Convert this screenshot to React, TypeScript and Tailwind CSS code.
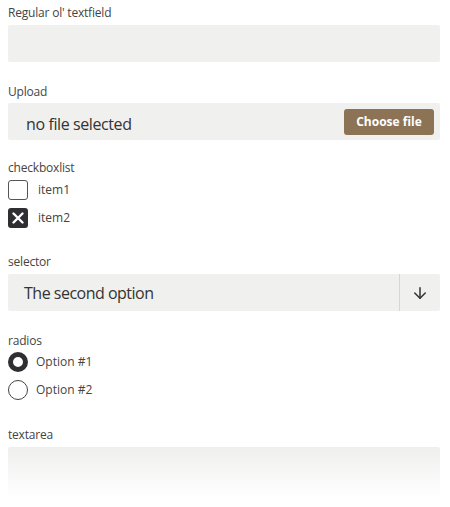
import { ArrowDown } from "lucide-react";

const font = { fontFamily: '"Open Sans", "Liberation Sans", sans-serif' };

function Label({ children }: { children: string }) {
  return <div className="h-[17px] text-[12px] leading-[17px] tracking-[-0.2px] text-[#444]">{children}</div>;
}

function Checkbox({ checked, label }: { checked?: boolean; label: string }) {
  return (
    <div className="flex h-[20px] items-center gap-[10px]">
      {checked ? (
        <span className="flex h-[20px] w-[20px] items-center justify-center rounded-[3px] bg-[#2e2e33]">
          <svg width="12" height="12" viewBox="0 0 12 12">
            <path d="M1.5 1.5 L10.5 10.5 M10.5 1.5 L1.5 10.5" stroke="#fff" strokeWidth="2.4" strokeLinecap="round" />
          </svg>
        </span>
      ) : (
        <span className="h-[20px] w-[20px] rounded-[3px] border-[1.5px] border-[#555]" />
      )}
      <span className="text-[12px] text-[#444]">{label}</span>
    </div>
  );
}

function Radio({ checked, label }: { checked?: boolean; label: string }) {
  return (
    <div className="flex h-[20px] items-center gap-[8px]">
      {checked ? (
        <span className="h-[20px] w-[20px] rounded-full border-[5px] border-[#2e2e33] bg-white" />
      ) : (
        <span className="h-[20px] w-[20px] rounded-full border-[1.5px] border-[#444]" />
      )}
      <span className="text-[12px] text-[#444]">{label}</span>
    </div>
  );
}

export default function App() {
  return (
    <div className="min-h-[507px] bg-white pl-2 pr-[10px] pt-[4px]" style={font}>
      <Label>Regular ol' textfield</Label>
      <div className="mt-[4px] h-[37px] rounded-[2px] bg-[#f0f0ee]" />

      <div className="mt-[21px]">
        <Label>Upload</Label>
      </div>
      <div className="mt-[3px] flex h-[37px] items-center justify-between rounded-[2px] bg-[#f0f0ee] pl-[18px] pr-[6px]">
        <span className="pt-[4px] text-[16px] tracking-[-0.4px] text-[#333]">no file selected</span>
        <button className="h-[26px] w-[90px] rounded-[3px] bg-[#8c7356] text-[12px] font-bold text-white">
          Choose file
        </button>
      </div>

      <div className="mt-[19px]">
        <Label>checkboxlist</Label>
      </div>
      <div className="mt-[4px] flex flex-col gap-[8px]">
        <Checkbox label="item1" />
        <Checkbox checked label="item2" />
      </div>

      <div className="mt-[25px]">
        <Label>selector</Label>
      </div>
      <div className="mt-[4px] flex h-[37px] items-stretch rounded-[2px] bg-[#f0f0ee]">
        <span className="flex flex-1 items-center pl-[16px] text-[16px] tracking-[-0.5px] text-[#333]">The second option</span>
        <span className="w-px bg-[#d6d6d4]" />
        <span className="flex w-[40px] items-center justify-center text-[#333]">
          <ArrowDown size={18} strokeWidth={2} />
        </span>
      </div>

      <div className="mt-[21px]">
        <Label>radios</Label>
      </div>
      <div className="mt-[3px] flex flex-col gap-[8px]">
        <Radio checked label="Option #1" />
        <Radio label="Option #2" />
      </div>

      <div className="mt-[26px]">
        <Label>textarea</Label>
      </div>
      <div className="mt-[4px] h-[52px] rounded-[2px] bg-gradient-to-b from-[#efefee] to-white" />
    </div>
  );
}
